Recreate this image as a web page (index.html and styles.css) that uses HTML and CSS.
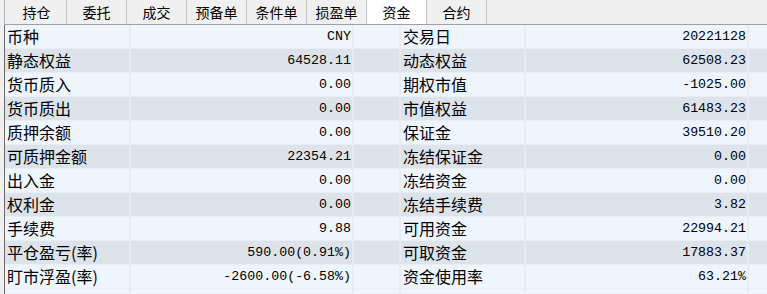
FILE: index.html
```html
<!DOCTYPE html>
<html lang="zh-CN">

<head>
  <meta charset="UTF-8">
  <title>资金</title>
  <link rel="stylesheet" href="styles.css">
</head>

<body>
  <div class="tabs">
    <div class="tab">持仓</div>
    <div class="tab">委托</div>
    <div class="tab">成交</div>
    <div class="tab">预备单</div>
    <div class="tab">条件单</div>
    <div class="tab">损盈单</div>
    <div class="tab active">资金</div>
    <div class="tab">合约</div>
  </div>

  <div class="funds">
    <div class="row">
      <div class="cell label">币种</div>
      <div class="cell value">CNY</div>
      <div class="cell"></div>
      <div class="cell label">交易日</div>
      <div class="cell value">20221128</div>
      <div class="cell rest"></div>
    </div>
    <div class="row">
      <div class="cell label">静态权益</div>
      <div class="cell value">64528.11</div>
      <div class="cell"></div>
      <div class="cell label">动态权益</div>
      <div class="cell value">62508.23</div>
      <div class="cell rest"></div>
    </div>
    <div class="row">
      <div class="cell label">货币质入</div>
      <div class="cell value">0.00</div>
      <div class="cell"></div>
      <div class="cell label">期权市值</div>
      <div class="cell value">-1025.00</div>
      <div class="cell rest"></div>
    </div>
    <div class="row">
      <div class="cell label">货币质出</div>
      <div class="cell value">0.00</div>
      <div class="cell"></div>
      <div class="cell label">市值权益</div>
      <div class="cell value">61483.23</div>
      <div class="cell rest"></div>
    </div>
    <div class="row">
      <div class="cell label">质押余额</div>
      <div class="cell value">0.00</div>
      <div class="cell"></div>
      <div class="cell label">保证金</div>
      <div class="cell value">39510.20</div>
      <div class="cell rest"></div>
    </div>
    <div class="row">
      <div class="cell label">可质押金额</div>
      <div class="cell value">22354.21</div>
      <div class="cell"></div>
      <div class="cell label">冻结保证金</div>
      <div class="cell value">0.00</div>
      <div class="cell rest"></div>
    </div>
    <div class="row">
      <div class="cell label">出入金</div>
      <div class="cell value">0.00</div>
      <div class="cell"></div>
      <div class="cell label">冻结资金</div>
      <div class="cell value">0.00</div>
      <div class="cell rest"></div>
    </div>
    <div class="row">
      <div class="cell label">权利金</div>
      <div class="cell value">0.00</div>
      <div class="cell"></div>
      <div class="cell label">冻结手续费</div>
      <div class="cell value">3.82</div>
      <div class="cell rest"></div>
    </div>
    <div class="row">
      <div class="cell label">手续费</div>
      <div class="cell value">9.88</div>
      <div class="cell"></div>
      <div class="cell label">可用资金</div>
      <div class="cell value">22994.21</div>
      <div class="cell rest"></div>
    </div>
    <div class="row">
      <div class="cell label">平仓盈亏(率)</div>
      <div class="cell value">590.00(0.91%)</div>
      <div class="cell"></div>
      <div class="cell label">可取资金</div>
      <div class="cell value">17883.37</div>
      <div class="cell rest"></div>
    </div>
    <div class="row">
      <div class="cell label">盯市浮盈(率)</div>
      <div class="cell value">-2600.00(-6.58%)</div>
      <div class="cell"></div>
      <div class="cell label">资金使用率</div>
      <div class="cell value">63.21%</div>
      <div class="cell rest"></div>
    </div>
    <!-- empty trailing row, only its top shows -->
    <div class="row tail">
      <div class="cell"></div>
      <div class="cell"></div>
      <div class="cell"></div>
      <div class="cell"></div>
      <div class="cell"></div>
      <div class="cell rest"></div>
    </div>
  </div>
</body>

</html>
```

FILE: styles.css
```css
body {
  margin: 0;
  background: #f0f0f0;
  font-family: "Noto Sans CJK SC", "Noto Sans", sans-serif;
  color: #000;
  overflow: hidden;
}

.tabs {
  display: flex;
  height: 24px;
  margin-left: 4px;
  padding-left: 2px;
  border-left: 1px solid #b4b4b4;
  border-bottom: 1px solid #a0a0a0;
}

.tab {
  width: 59px;
  height: 24px;
  border-right: 1px solid #c4c4c4;
  font-size: 14px;
  line-height: 24px;
  text-align: center;
}

.tab.active {
  background: #fff;
}

.funds {
  margin-left: 4px;
  border-left: 1px solid #6a6a6a;
}

.row {
  display: grid;
  grid-template-columns: 126px 223px 47px 125px 223px 1fr;
  height: 23px;
  border-bottom: 1px solid #e9eef4;
  background: #eff5fd;
}

.row:nth-child(even) {
  background: #dde3ea;
}

.row.tail {
  height: 5px;
  border-bottom: none;
  background: #eff5fd;
}

.cell {
  border-right: 2px solid #e8ecf2;
  white-space: nowrap;
  overflow: hidden;
}

.cell.rest {
  border-right: none;
}

.label {
  padding-left: 2px;
  font-size: 16px;
  line-height: 23px;
}

.value {
  padding-right: 1px;
  text-align: right;
  font-family: "Liberation Mono", monospace;
  font-size: 13.3px;
  line-height: 23px;
}
```
